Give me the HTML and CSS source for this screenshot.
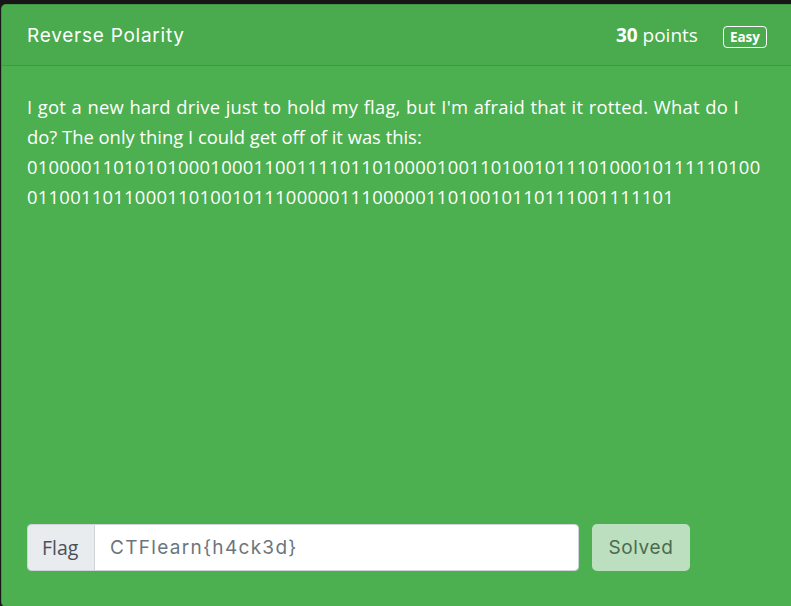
FILE: index.html
```html
<!DOCTYPE html>
<html lang="en">
<head>
<meta charset="utf-8">
<title>Reverse Polarity</title>
<link rel="stylesheet" href="styles.css">
</head>
<body>
<div class="page">
  <div class="card">
    <div class="card-header">
      <div class="title">Reverse Polarity</div>
      <div class="meta">
        <span class="points"><b>30</b> points</span>
        <span class="badge">Easy</span>
      </div>
    </div>
    <div class="card-body">
      <p class="desc"><span class="wide">I got a new hard drive just to hold my flag, but I'm afraid that it rotted. What do I</span><br>do? The only thing I could get off of it was this:<br><span class="bin">0100001101010100010001100111101101000010011010010111010001011111010<wbr>0<br>011001101100011010010111000001110000011010010110111001111101</span></p>
      <div class="flag-row">
        <div class="input-group">
          <span class="addon">Flag</span>
          <input class="flag-input" type="text" value="CTFlearn{h4ck3d}" readonly>
        </div>
        <button class="solved" type="button">Solved</button>
      </div>
    </div>
  </div>
</div>
</body>
</html>
```
FILE: styles.css
```css
html, body {
  margin: 0;
  padding: 0;
  background: #171717;
  overflow: hidden;
}
.page {
  padding: 4px 0 0 1px;
  width: 830px;
}
.card {
  background: #4caf50;
  border: 1px solid rgba(0, 0, 0, 0.14);
  border-radius: 5px;
  color: #fff;
}
.card-header {
  height: 60px;
  display: flex;
  align-items: center;
  padding: 0 25px;
  background: #4aaa4e;
  border-bottom: 1px solid rgba(0, 0, 0, 0.12);
  border-radius: 5px 5px 0 0;
}
.title {
  flex: 1;
  font-family: "Inter", "Open Sans", sans-serif;
  font-size: 19px;
  letter-spacing: 0.75px;
  color: #fff;
}
.meta {
  display: flex;
  align-items: center;
  gap: 25px;
  margin-right: 38px;
}
.points {
  font-family: "Open Sans", sans-serif;
  font-size: 19px;
}
.points b {
  font-weight: 700;
}
.badge {
  margin-top: 3px;
  font-family: "Open Sans", sans-serif;
  font-weight: 700;
  font-size: 13.5px;
  line-height: 20px;
  padding: 0 6px;
  border: 1px solid #fff;
  border-radius: 4px;
}
.card-body {
  height: 479px;
  padding: 26px 25px 35px;
  display: flex;
  flex-direction: column;
}
.desc {
  margin: 0;
  font-family: "Open Sans", sans-serif;
  font-size: 18.4px;
  line-height: 30px;
  white-space: nowrap;
}
.wide {
  letter-spacing: 0.22px;
  word-spacing: 0.5px;
}
.bin {
  letter-spacing: 0.27px;
}
.flag-row {
  margin-top: auto;
  display: flex;
  gap: 13px;
}
.input-group {
  display: flex;
  width: 552px;
  height: 47px;
  border-radius: 4px;
  overflow: hidden;
  border: 1px solid #ced4da;
  box-sizing: border-box;
}
.addon {
  display: flex;
  align-items: center;
  padding: 0 14px;
  width: 67px;
  box-sizing: border-box;
  background: #e9ecef;
  border-right: 1px solid #ced4da;
  color: #495057;
  font-family: "Open Sans", sans-serif;
  font-size: 19.5px;
}
.flag-input {
  flex: 1;
  border: 0;
  outline: none;
  padding: 0 15px;
  background: #fff;
  color: #6c757d;
  font-family: "Inter", sans-serif;
  font-size: 19px;
  letter-spacing: 1.3px;
}
.solved {
  width: 98px;
  height: 47px;
  border: 0;
  border-radius: 5px;
  background: #bcdfc0;
  color: #4b6b4e;
  font-family: "Inter", sans-serif;
  font-size: 19px;
  letter-spacing: 0.6px;
  padding: 0;
}
```
